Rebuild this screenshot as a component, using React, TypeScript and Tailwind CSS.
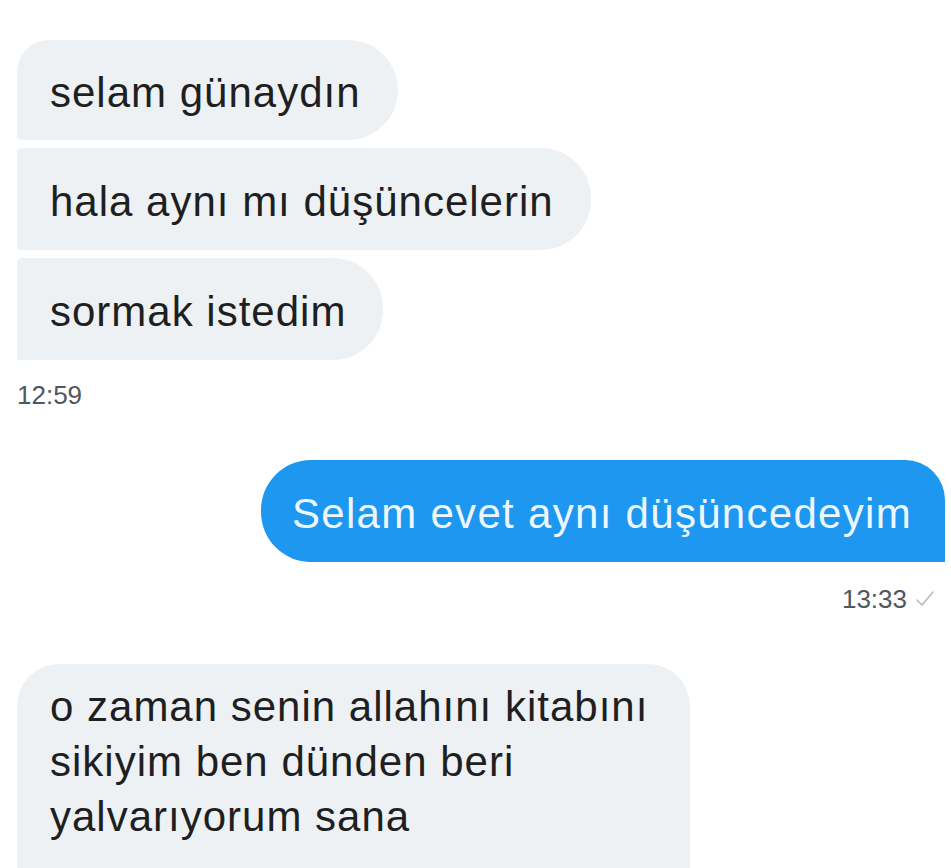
const font = { fontFamily: '"Liberation Sans", Arial, sans-serif' };

const App = () => {
  return (
    <div
      className="w-[951px] h-[868px] overflow-hidden bg-white text-[#1e1f21]"
      style={font}
    >
      <div className="flex flex-col pl-[17px] pr-[6px] pt-[40px]">
        {/* received group */}
        <div className="flex flex-col items-start gap-[8px]">
          <div className="h-[100px] flex items-center pt-[4px] pl-[33px] pr-[37px] bg-[#eef1f4] rounded-tl-[32px] rounded-bl-[4px] rounded-r-[50px] text-[42px] tracking-[1px]">
            selam günaydın
          </div>
          <div className="h-[102px] flex items-center pt-[4px] pl-[33px] pr-[37px] bg-[#eef1f4] rounded-l-[4px] rounded-r-[50px] text-[42px] tracking-[1px]">
            hala aynı mı düşüncelerin
          </div>
          <div className="h-[102px] flex items-center pt-[4px] pl-[33px] pr-[37px] bg-[#eef1f4] rounded-tl-[4px] rounded-bl-none rounded-r-[50px] text-[42px] tracking-[1px]">
            sormak istedim
          </div>
        </div>
        <span className="mt-[22px] text-[26px] leading-none text-[#50575e]">12:59</span>

        {/* sent */}
        <div className="mt-[52px] flex flex-col items-end">
          <div className="h-[102px] flex items-center pt-[4px] pl-[31px] pr-[33px] bg-[#1d97f0] rounded-l-[50px] rounded-tr-[40px] rounded-br-none text-[42px] tracking-[1.3px] text-[#eef7ff]">
            Selam evet aynı düşüncedeyim
          </div>
          <div className="mt-[24px] mr-[10px] flex items-center gap-[8px] text-[26px] leading-none text-[#50575e]">
            <span>13:33</span>
            <svg width="20" height="18" viewBox="0 0 20 18" fill="none">
              <path d="M2 10l5 5 11-13" stroke="#b5bcc3" strokeWidth="1.6" strokeLinecap="round" strokeLinejoin="round" />
            </svg>
          </div>
        </div>

        {/* received */}
        <div className="mt-[52px] flex">
          <div className="w-[673px] h-[240px] pl-[33px] pt-[15px] bg-[#eef1f4] rounded-t-[42px] text-[42px] leading-[55px] tracking-[1px]">
            o zaman senin allahını kitabını
            <br />
            sikiyim ben dünden beri
            <br />
            yalvarıyorum sana
          </div>
        </div>
      </div>
    </div>
  );
};

export default App;
